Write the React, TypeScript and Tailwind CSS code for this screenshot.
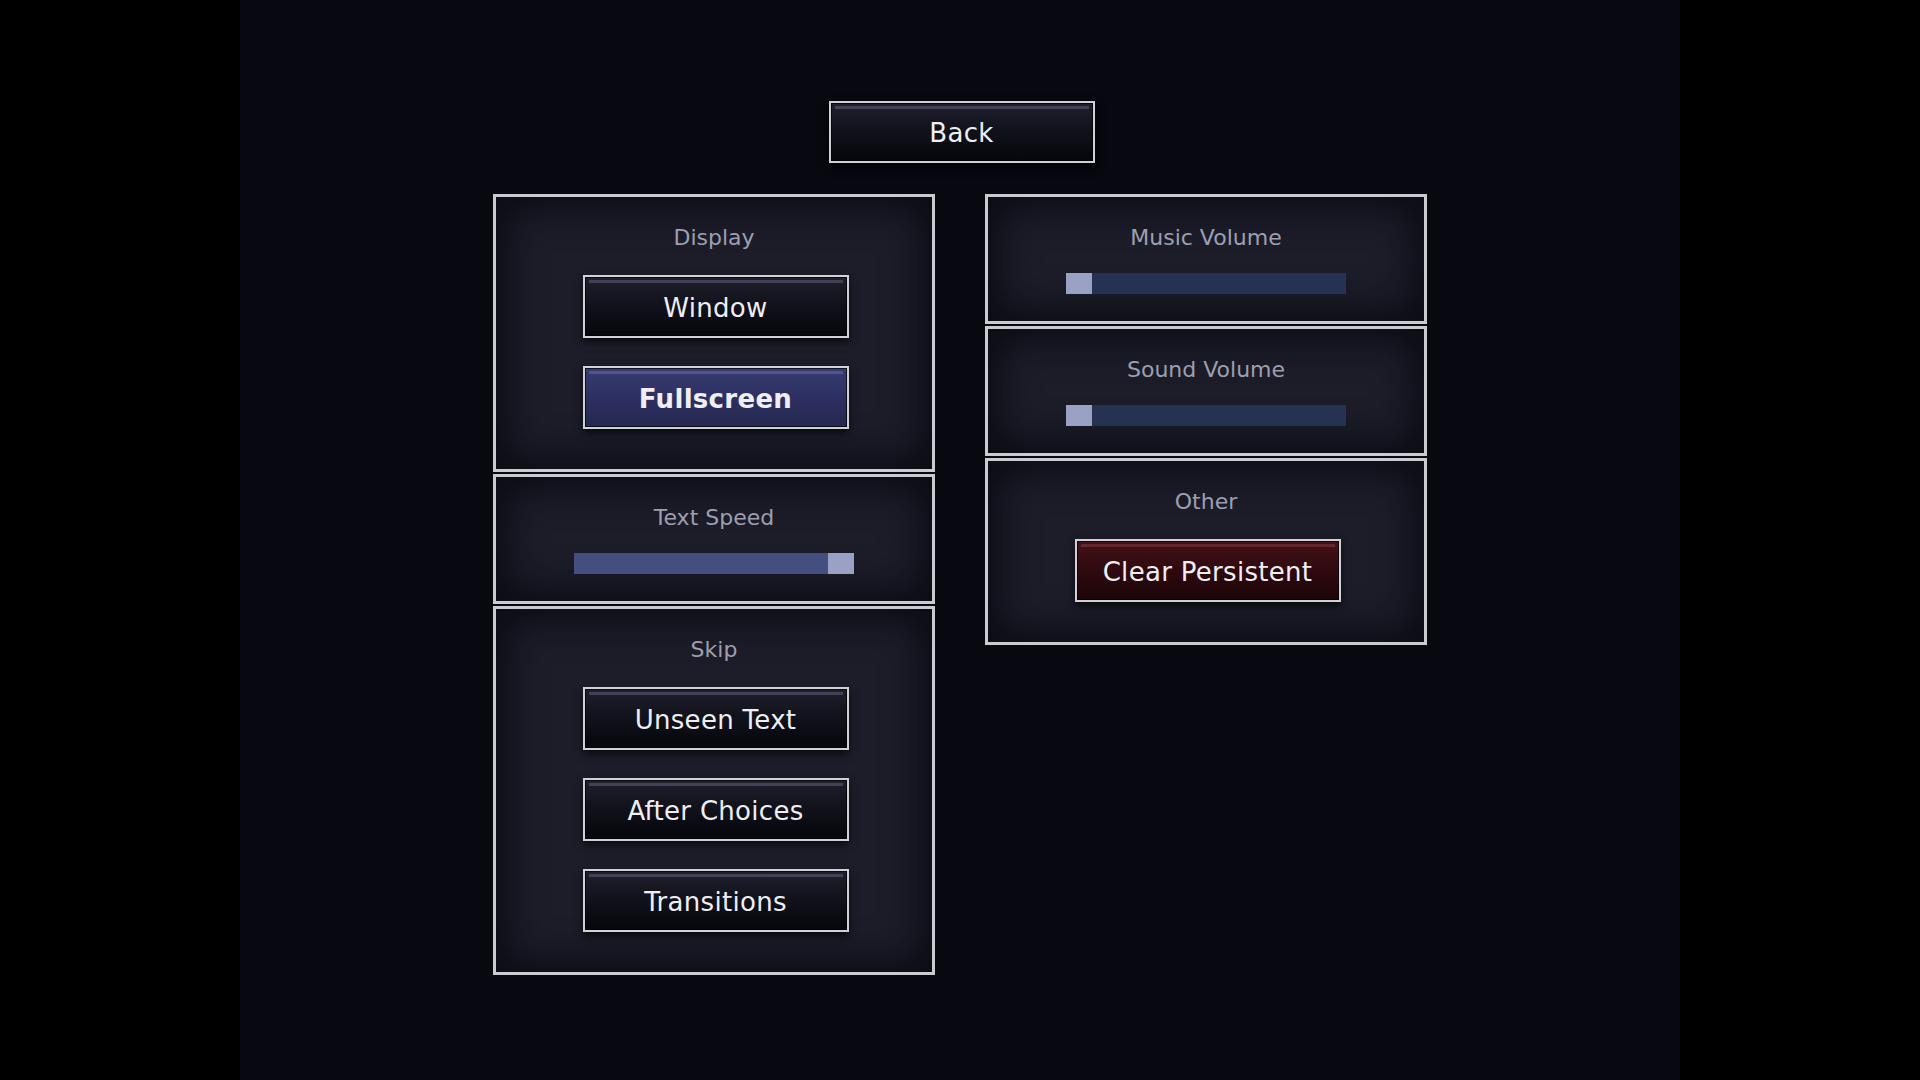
import React from 'react';

type Tone = 'plain' | 'selected' | 'danger';

const tones: Record<Tone, { bg: string; hi: string }> = {
    plain: { bg: 'bg-gradient-to-b from-[#1f202d] via-[#10111a] to-[#06070c]', hi: 'bg-[#4a4c60]' },
    selected: { bg: 'bg-gradient-to-b from-[#373b70] via-[#2d3061] to-[#25284f]', hi: 'bg-[#585c96]' },
    danger: { bg: 'bg-gradient-to-b from-[#441118] via-[#2f0a0f] to-[#1c0508]', hi: 'bg-[#6a2c32]' },
};

const MenuButton: React.FC<{ label: string; tone?: Tone; bold?: boolean; short?: boolean }> = ({ label, tone = 'plain', bold, short }) => {
    const t = tones[tone];
    return (
        <button
            className={`relative ml-[3px] w-[266px] ${short ? 'h-[62px]' : 'h-[63px]'} border-2 border-[#d0d1d6] ${t.bg} shadow-[0_4px_8px_rgba(0,0,0,0.65),inset_0_0_0_1px_rgba(0,0,0,0.7)] flex items-center justify-center`}
        >
            <span className={`absolute top-[3px] left-[4px] right-[4px] h-[3px] ${t.hi} opacity-80`}></span>
            <span className={`relative pt-[2px] text-[26px] leading-none text-[#eeeef3] tracking-[0.3px] ${bold ? 'font-bold' : ''}`}>{label}</span>
        </button>
    );
};

const Slider: React.FC<{ value: number }> = ({ value }) => {
    // value 0..1, thumb is 26px wide inside a 280px track
    const fill = Math.round(value * (280 - 26));
    return (
        <div className="relative w-[280px] h-[21px] bg-[#263252] flex">
            <div className="h-full bg-[#444f7f]" style={{ width: fill }}></div>
            <div className="h-full w-[26px] bg-[#9ba1c4]"></div>
        </div>
    );
};

const Panel: React.FC<{ title: string; slider?: boolean; children: React.ReactNode }> = ({ title, slider, children }) => (
    <div
        className={`w-[442px] border-[3px] border-[#cacbd0] bg-[#1c1d29] shadow-[inset_0_0_36px_12px_rgba(6,7,13,0.75)] flex flex-col items-center pt-[26px] ${slider ? 'pb-[27px]' : 'pb-[40px]'}`}
    >
        <div className="text-[22px] leading-[30px] text-[#9d9fb0]">{title}</div>
        <div className={`flex flex-col items-center ${slider ? 'mt-[20px]' : 'mt-[22px] gap-[28px]'}`}>{children}</div>
    </div>
);

export default function App() {
    return (
        <div className="min-h-screen w-full bg-black flex justify-center font-['DejaVu_Sans','Liberation_Sans',sans-serif]">
            <div className="w-[1440px] h-[1080px] bg-[#070810] flex flex-col items-center pt-[101px]">
                <MenuButton label="Back" short />

                <div className="mt-[31px] flex gap-[50px] items-start">
                    <div className="flex flex-col gap-[2px]">
                        <Panel title="Display">
                            <MenuButton label="Window" />
                            <MenuButton label="Fullscreen" tone="selected" bold />
                        </Panel>
                        <Panel title="Text Speed" slider>
                            <Slider value={1} />
                        </Panel>
                        <Panel title="Skip">
                            <MenuButton label="Unseen Text" />
                            <MenuButton label="After Choices" />
                            <MenuButton label="Transitions" />
                        </Panel>
                    </div>

                    <div className="flex flex-col gap-[2px]">
                        <Panel title="Music Volume" slider>
                            <Slider value={0} />
                        </Panel>
                        <Panel title="Sound Volume" slider>
                            <Slider value={0} />
                        </Panel>
                        <Panel title="Other">
                            <MenuButton label="Clear Persistent" tone="danger" />
                        </Panel>
                    </div>
                </div>
            </div>
        </div>
    );
}
